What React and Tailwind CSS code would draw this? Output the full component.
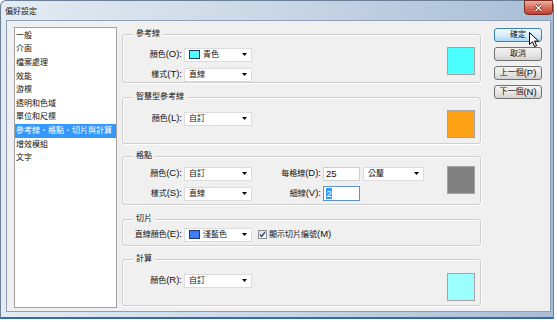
import React from "react";

function T({ s }) {
  const parts = s.split(/([\x20-\x7e]+)/).filter(Boolean);
  return parts.map((p, i) =>
    /^[\x20-\x7e]+$/.test(p) ? (
      <span key={i} className="text-[9.5px]">{p}</span>
    ) : (
      <span key={i}>{p}</span>
    )
  );
}

function Arrow() {
  return (
    <svg width="5" height="3" viewBox="0 0 5 3" className="shrink-0">
      <path d="M0 0H5L2.5 3Z" fill="#000" />
    </svg>
  );
}

function Select({ w, swatch, text }) {
  return (
    <div className={`h-[14px] ${w} bg-white border border-[#dcdcdc] flex items-center pl-[4px] pr-[4px]`}>
      {swatch && <span className={`w-[11px] h-[9px] border border-[#1e3a66] mr-[3px] shrink-0 ${swatch}`} />}
      <span className="flex-1 leading-[12px]">
        <T s={text} />
      </span>
      <Arrow />
    </div>
  );
}

function Label({ w, s }) {
  return (
    <div className={`${w} text-right leading-[14px] whitespace-nowrap`}>
      <T s={s} />
    </div>
  );
}

function Swatch({ color }) {
  return <div className={`w-[28px] h-[28px] border border-[#a3a3a3] ${color}`} />;
}

function Group({ title, className, children }) {
  return (
    <div className={`relative border border-[#cfcfcf] rounded-[3px] shadow-[inset_1px_1px_0_#ffffff,1px_1px_0_#ffffff] ${className}`}>
      <span className="absolute left-[10px] top-[-7px] px-[3px] bg-[#f0f0f0] leading-[12px] whitespace-nowrap">
        <T s={title} />
      </span>
      {children}
    </div>
  );
}

function Button({ def, s }) {
  return (
    <div
      className={
        def
          ? "h-[14px] w-[48px] rounded-[3px] border border-[#3c7fb1] bg-gradient-to-b from-[#eef8fe] via-[#d9effc] to-[#a9daf6] flex items-center justify-center leading-[12px]"
          : "h-[14px] w-[48px] rounded-[3px] border border-[#707070] bg-gradient-to-b from-[#f4f4f4] via-[#e8e8e8] to-[#d2d2d2] flex items-center justify-center leading-[12px]"
      }
    >
      <T s={s} />
    </div>
  );
}

const items = [
  "一般",
  "介面",
  "檔案處理",
  "效能",
  "游標",
  "透明和色域",
  "單位和尺標",
  "參考線、格點、切片與計算",
  "增效模組",
  "文字",
];

export default function App() {
  return (
    <div className="w-[557px] h-[322px] bg-white overflow-hidden relative text-[8px] text-[#111] font-['Liberation_Sans','Noto_Sans_CJK_TC',sans-serif]">
      <div className="w-[554px] h-[319px] border border-[#6b7f96] border-b-[2px] border-b-[#2f6ea8] rounded-t-[6px] bg-gradient-to-r from-[#e4ebf3] via-[#c9d7e6] to-[#a8bdd6] flex flex-col">
        {/* title bar */}
        <div className="h-[19px] flex justify-between shrink-0">
          <div className="pl-[4px] pt-[6px] leading-[10px] text-[#1a1a1a]">偏好設定</div>
          <div className="w-[29px] h-[15px] mt-[-1px] rounded-b-[4px] border border-[#7a2a20] bg-gradient-to-b from-[#eab0a4] via-[#d6705f] to-[#c0402c] flex items-center justify-center">
            <svg width="9" height="8" viewBox="0 0 9 8">
              <path d="M1.5 1L7.5 7M7.5 1L1.5 7" stroke="#5a1a12" strokeWidth="2.6" />
              <path d="M1.5 1L7.5 7M7.5 1L1.5 7" stroke="#ffffff" strokeWidth="1.4" />
            </svg>
          </div>
        </div>
        {/* body */}
        <div className="flex-1 pl-[5px] pr-[2px] pb-[5px] flex">
          <div className="relative flex-1 bg-[#f0f0f0] border border-[#8c9fb5] flex items-start pl-[7px] pt-[6px]">
            {/* list */}
            <div className="w-[103px] h-[281px] bg-white border border-[#a2a2a2] pt-[1px] shrink-0">
              {items.map((it, i) => (
                <div
                  key={i}
                  className={
                    i === 7
                      ? "h-[13.6px] pl-[1px] flex items-center bg-[#3399ff] text-white whitespace-nowrap"
                      : "h-[13.6px] pl-[1px] flex items-center whitespace-nowrap"
                  }
                >
                  {it}
                </div>
              ))}
            </div>

            {/* panel */}
            <div className="ml-[5px] w-[359px] flex flex-col shrink-0">
              <Group title="參考線" className="mt-[7px] h-[49px] pt-[12px] pr-[5px]">
                <div className="flex justify-between">
                  <div className="flex flex-col gap-[5px]">
                    <div className="flex items-center">
                      <Label w="w-[59px]" s="顏色(O):" />
                      <div className="ml-[2px]">
                        <Select w="w-[68px]" swatch="bg-[#4dffff]" text="青色" />
                      </div>
                    </div>
                    <div className="flex items-center">
                      <Label w="w-[59px]" s="樣式(T):" />
                      <div className="ml-[2px]">
                        <Select w="w-[68px]" text="直線" />
                      </div>
                    </div>
                  </div>
                  <Swatch color="bg-[#4dffff]" />
                </div>
              </Group>

              <Group title="智慧型參考線" className="mt-[14px] h-[47px] pt-[12px] pr-[5px]">
                <div className="flex justify-between">
                  <div className="flex items-center mt-[1px] self-start">
                    <Label w="w-[59px]" s="顏色(L):" />
                    <div className="ml-[2px]">
                      <Select w="w-[68px]" text="自訂" />
                    </div>
                  </div>
                  <Swatch color="bg-[#ffa114]" />
                </div>
              </Group>

              <Group title="格點" className="mt-[12px] h-[49px] pt-[9px] pr-[5px]">
                <div className="flex justify-between">
                  <div className="flex flex-col gap-[5px]">
                    <div className="flex items-center">
                      <Label w="w-[59px]" s="顏色(C):" />
                      <div className="ml-[2px]">
                        <Select w="w-[68px]" text="自訂" />
                      </div>
                      <Label w="w-[69px]" s="每格線(D):" />
                      <div className="ml-[2px] h-[14px] w-[37px] bg-white border border-[#cfcfcf] flex items-center pl-[2px] leading-[12px]">
                        <span className="text-[9.5px]">25</span>
                      </div>
                      <div className="ml-[3px]">
                        <Select w="w-[61px]" text="公釐" />
                      </div>
                    </div>
                    <div className="flex items-center">
                      <Label w="w-[59px]" s="樣式(S):" />
                      <div className="ml-[2px]">
                        <Select w="w-[68px]" text="直線" />
                      </div>
                      <Label w="w-[69px]" s="細線(V):" />
                      <div className="ml-[2px] h-[15px] w-[37px] bg-white border border-[#5b93c8] flex items-center pl-[2px] leading-[11px]">
                        <span className="text-[9.5px] bg-[#3399ff] text-white px-[0.5px]">2</span>
                      </div>
                    </div>
                  </div>
                  <Swatch color="bg-[#808080]" />
                </div>
              </Group>

              <Group title="切片" className="mt-[14px] h-[27px] pt-[7px] pr-[5px]">
                <div className="flex items-center">
                  <Label w="w-[59px]" s="直線顏色(E):" />
                  <div className="ml-[2px]">
                    <Select w="w-[68px]" swatch="bg-[#3f7bff]" text="淺藍色" />
                  </div>
                  <div className="ml-[6px] w-[9px] h-[9px] border border-[#8e8f8f] bg-gradient-to-br from-[#dcdcdc] to-[#ffffff] flex items-center justify-center">
                    <svg width="7" height="7" viewBox="0 0 7 7">
                      <path d="M1 3.5L2.8 5.5L6 1" stroke="#2a4a78" strokeWidth="1.3" fill="none" />
                    </svg>
                  </div>
                  <div className="ml-[2px] leading-[14px] whitespace-nowrap">
                    <T s="顯示切片編號(M)" />
                  </div>
                </div>
              </Group>

              <Group title="計算" className="mt-[13px] h-[47px] pt-[13px] pr-[5px]">
                <div className="flex justify-between">
                  <div className="flex items-center self-start">
                    <Label w="w-[59px]" s="顏色(R):" />
                    <div className="ml-[2px]">
                      <Select w="w-[68px]" text="自訂" />
                    </div>
                  </div>
                  <Swatch color="bg-[#9cffff]" />
                </div>
              </Group>
            </div>

            {/* buttons */}
            <div className="ml-[13px] mt-[1px] flex flex-col gap-[5px]">
              <Button def s="確定" />
              <Button s="取消" />
              <Button s="上一個(P)" />
              <Button s="下一個(N)" />
            </div>

            {/* cursor */}
            <svg
              className="absolute left-[522px] top-[11px]"
              width="11"
              height="16"
              viewBox="0 0 11 16"
            >
              <path
                d="M0.5 0.5V12.5L3.5 9.8L5.6 14.6L7.6 13.7L5.6 9.1H9.5Z"
                fill="#ffffff"
                stroke="#000000"
                strokeWidth="1"
                strokeLinejoin="round"
              />
            </svg>
          </div>
        </div>
      </div>
    </div>
  );
}
